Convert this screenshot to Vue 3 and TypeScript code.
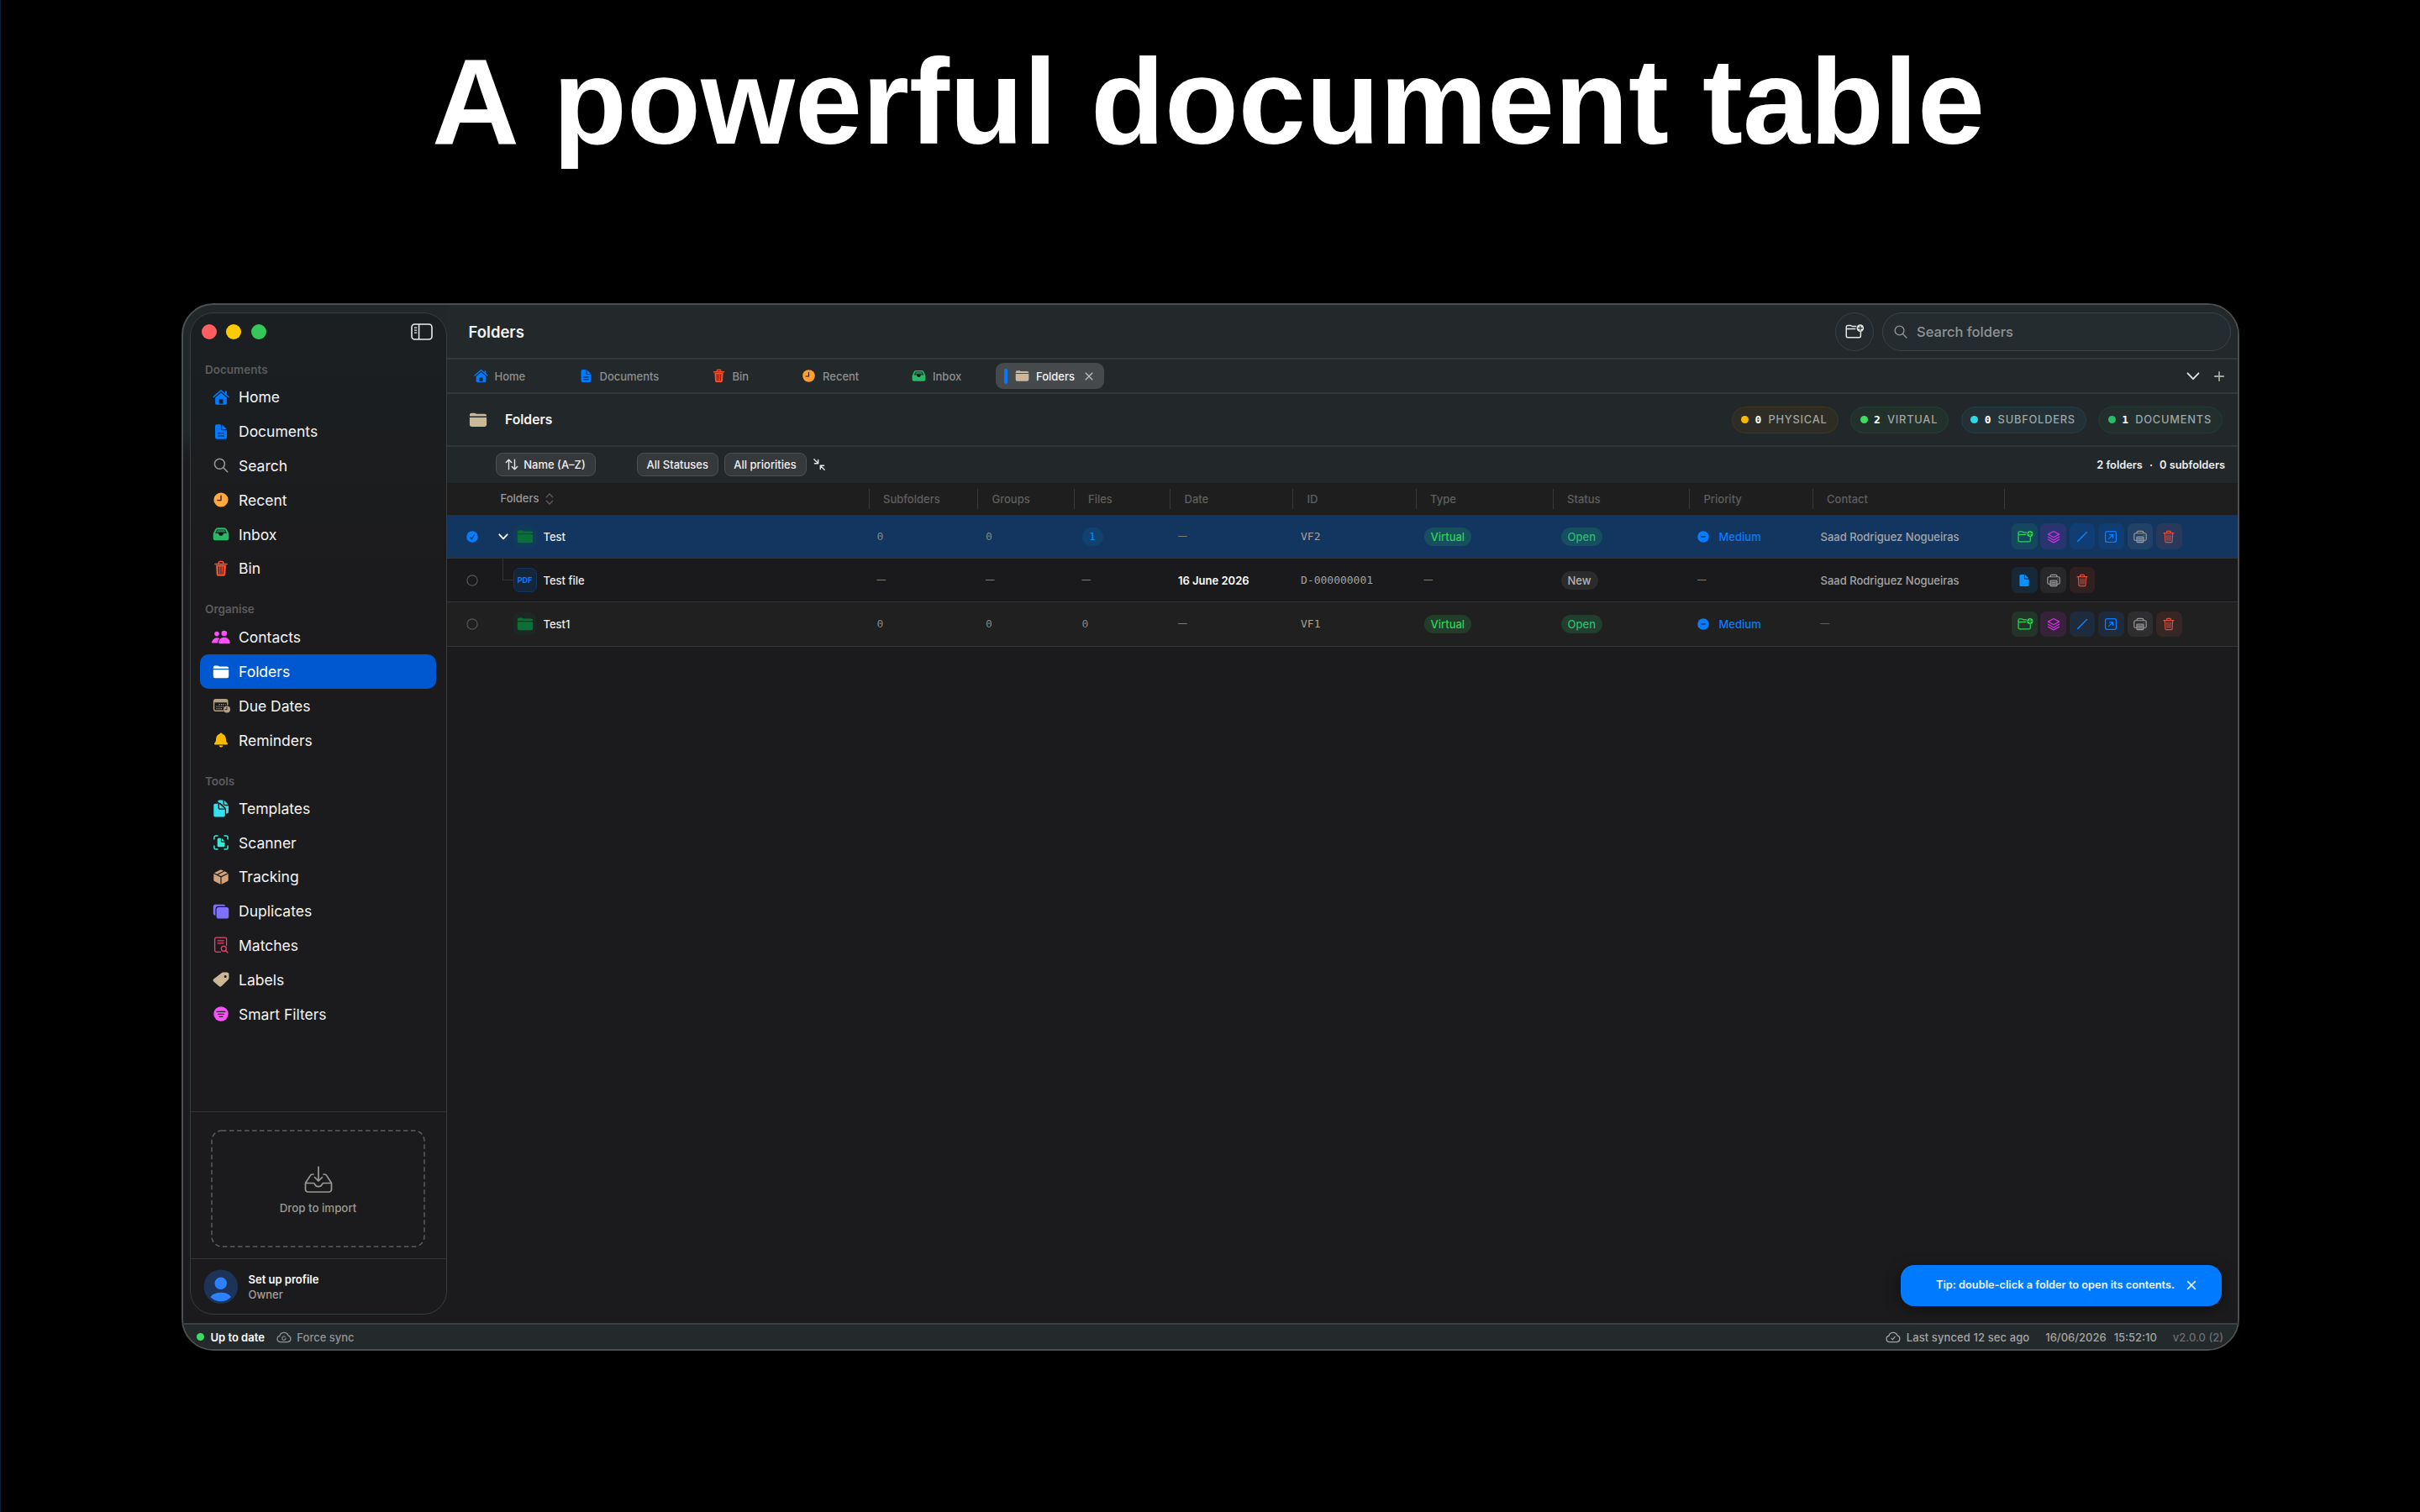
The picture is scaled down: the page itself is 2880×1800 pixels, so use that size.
<script setup lang="ts">
interface NavItem {
  label: string
  icon: string
  color: string
  active?: boolean
}
interface NavGroup {
  title: string
  items: NavItem[]
}
interface Tab {
  label: string
  icon: string
  color: string
  width: number
}
interface Action {
  icon: string
  color: string
}
interface Row {
  name: string
  kind: 'folder' | 'file'
  selected?: boolean
  subfolders: string
  groups: string
  files: string
  date: string
  id: string
  type: string
  status: string
  priority: string
  contact: string
  actions: Action[]
}

const groups: NavGroup[] = [
  {
    title: 'Documents',
    items: [
      { label: 'Home', icon: 'home', color: '#007aff' },
      { label: 'Documents', icon: 'doc', color: '#007aff' },
      { label: 'Search', icon: 'search', color: '#98999b' },
      { label: 'Recent', icon: 'clock', color: '#ffa940' },
      { label: 'Inbox', icon: 'inbox', color: '#28b866' },
      { label: 'Bin', icon: 'binFill', color: '#f2502f' },
    ],
  },
  {
    title: 'Organise',
    items: [
      { label: 'Contacts', icon: 'people', color: '#fa50fa' },
      { label: 'Folders', icon: 'folder', color: '#ffffff', active: true },
      { label: 'Due Dates', icon: 'calendar', color: '#b5a284' },
      { label: 'Reminders', icon: 'bell', color: '#fcb900' },
    ],
  },
  {
    title: 'Tools',
    items: [
      { label: 'Templates', icon: 'docs', color: '#33e1ee' },
      { label: 'Scanner', icon: 'scanner', color: '#33ecd6' },
      { label: 'Tracking', icon: 'box', color: '#d4a27a' },
      { label: 'Duplicates', icon: 'duplicate', color: '#8070ff' },
      { label: 'Matches', icon: 'matches', color: '#f0406c' },
      { label: 'Labels', icon: 'tag', color: '#cbb796' },
      { label: 'Smart Filters', icon: 'filter', color: '#fa50fa' },
    ],
  },
]

const tabs: Tab[] = [
  { label: 'Home', icon: 'home', color: '#007aff', width: 125 },
  { label: 'Documents', icon: 'doc', color: '#007aff', width: 158 },
  { label: 'Bin', icon: 'binFill', color: '#f2502f', width: 107.5 },
  { label: 'Recent', icon: 'clock', color: '#ff9f30', width: 131 },
  { label: 'Inbox', icon: 'inbox', color: '#28b866', width: 101 },
]

const stats = [
  { value: '0', label: 'PHYSICAL', tone: 'amber' },
  { value: '2', label: 'VIRTUAL', tone: 'green' },
  { value: '0', label: 'SUBFOLDERS', tone: 'cyan' },
  { value: '1', label: 'DOCUMENTS', tone: 'emerald' },
]

const columns = ['Subfolders', 'Groups', 'Files', 'Date', 'ID', 'Type', 'Status', 'Priority', 'Contact', '']

const folderActions: Action[] = [
  { icon: 'folderPlus', color: '#30d158' },
  { icon: 'layers', color: '#d530ea' },
  { icon: 'pencil', color: '#0a7dff' },
  { icon: 'openIn', color: '#0a7dff' },
  { icon: 'printer', color: '#98989b' },
  { icon: 'bin', color: '#d8503f' },
]

const rows: Row[] = [
  {
    name: 'Test', kind: 'folder', selected: true, subfolders: '0', groups: '0', files: '1', date: '—',
    id: 'VF2', type: 'Virtual', status: 'Open', priority: 'Medium', contact: 'Saad Rodriguez Nogueiras',
    actions: folderActions,
  },
  {
    name: 'Test file', kind: 'file', subfolders: '—', groups: '—', files: '—', date: '16 June 2026',
    id: 'D-000000001', type: '—', status: 'New', priority: '—', contact: 'Saad Rodriguez Nogueiras',
    actions: [
      { icon: 'sheet', color: '#0a90ff' },
      { icon: 'printer', color: '#98989b' },
      { icon: 'bin', color: '#d8503f' },
    ],
  },
  {
    name: 'Test1', kind: 'folder', subfolders: '0', groups: '0', files: '0', date: '—',
    id: 'VF1', type: 'Virtual', status: 'Open', priority: 'Medium', contact: '—',
    actions: folderActions,
  },
]

const line = (d: string, w = 1.4) =>
  `<path d="${d}" fill="none" stroke="currentColor" stroke-width="${w}" stroke-linecap="round" stroke-linejoin="round"/>`
const fill = (d: string) => `<path d="${d}" fill="currentColor" fill-rule="evenodd"/>`
const dark = (d: string, w = 1.2) =>
  `<path d="${d}" fill="none" stroke="#1c1e20" stroke-width="${w}" stroke-linecap="round" stroke-linejoin="round"/>`

const icons: Record<string, string> = {
  home:
    line('M1.2 9.5 10 1.9l8.8 7.6', 1.6) +
    fill('M14.8 2.6h2v5.2l-2-1.8zM10 4.6l6.9 6v6.7a1.4 1.4 0 0 1-1.4 1.4h-11a1.4 1.4 0 0 1-1.4-1.4v-6.7zM8.2 12.3a.6.6 0 0 0-.6.6v4.6h4.8v-4.6a.6.6 0 0 0-.6-.6z'),
  doc:
    fill('M5 1.2h4.9v5.7a1.4 1.4 0 0 0 1.4 1.4H17v8.5a2 2 0 0 1-2 2H5a2 2 0 0 1-2-2V3.2a2 2 0 0 1 2-2zM11.2 1.4 16.8 7h-5a.6.6 0 0 1-.6-.6z') +
    dark('M6.7 11.7h6.6M6.7 15h6.6', 1.2),
  search: line('M14.4 8.3a6 6 0 1 1-12 0a6 6 0 1 1 12 0zM12.8 12.8l4.9 5', 1.5),
  clock: '<circle cx="10" cy="10" r="8.6" fill="currentColor"/>' + dark('M10 5.2v5.4H5.8', 1.3),
  inbox:
    fill('M6 2.3h8a3 3 0 0 1 2.7 1.6l2 4.2a5 5 0 0 1 .6 2.3v4.6a2.3 2.3 0 0 1-2.3 2.3H3a2.3 2.3 0 0 1-2.3-2.3v-4.6a5 5 0 0 1 .6-2.3l2-4.2A3 3 0 0 1 6 2.3z') +
    '<path d="M6.2 3.9h7.6a1.4 1.4 0 0 1 1.3.8l1.9 4.2h-3.6c-.8 0-.9 3-3.4 3s-2.6-3-3.4-3H3l1.9-4.2a1.4 1.4 0 0 1 1.3-.8z" fill="#17392a"/>' +
    line('M5.6 6.8h8.8M6.3 5h7.4', 0.9) +
    '<path d="M6.8 8h6.4L12 10.4q-2 1.8-4 0z" fill="#101312"/>',
  binFill:
    line('M2.8 4.4h14.4M7.3 4.2V2.6a1 1 0 0 1 1-1h3.4a1 1 0 0 1 1 1v1.6', 1.5) +
    fill('M4 5.6h12l-.7 11.4a2 2 0 0 1-2 1.8H6.7a2 2 0 0 1-2-1.8z') +
    dark('M7.3 7.8l.3 8.4M10 7.8v8.4M12.7 7.8l-.3 8.4', 1.1),
  bin:
    line('M2.6 4.6h14.8M7 4.4V2.6a1 1 0 0 1 1-1h4a1 1 0 0 1 1 1v1.8M4.2 4.8l.7 12a1.7 1.7 0 0 0 1.7 1.6h6.8a1.7 1.7 0 0 0 1.7-1.6l.7-12', 1.5) +
    line('M7.3 7.4l.3 8.2M10 7.4v8.2M12.7 7.4l-.3 8.2', 1.2),
  people:
    '<circle cx="5" cy="5.6" r="2.8" fill="currentColor"/><circle cx="13.8" cy="5" r="3.3" fill="currentColor"/>' +
    fill('M-1 16.6c0-3.5 2.6-6.3 6-6.3 1.3 0 2.4.4 3.3 1-1.5 1.3-2.2 3-2.3 5.3zM7.3 16c0-3.7 2.8-6.3 6.5-6.3s6.9 2.6 6.9 6.3q0 1.3-1.2 1.3H8.5q-1.2 0-1.2-1.3z'),
  folder:
    fill('M.8 7.2h18.4v7.9a2.2 2.2 0 0 1-2.2 2.2H3a2.2 2.2 0 0 1-2.2-2.2zM.8 6V4.7a2.2 2.2 0 0 1 2.2-2.2h3.2c.9 0 1.3.9 2.3.9H17a2.2 2.2 0 0 1 2.2 2.2V6z'),
  calendar:
    line('M12.5 16.3H3.6A2 2 0 0 1 1.6 14.3V4.7a2 2 0 0 1 2-2h12.2a2 2 0 0 1 2 2V9', 1.4) +
    fill('M1.5 4.7a2 2 0 0 1 2-2h12.4a2 2 0 0 1 2 2v1.5H1.5z') +
    '<path d="M7.5 8.7h8M4.5 11.2h8.5M4.5 13.6h6.5" stroke="currentColor" stroke-width="1.2" stroke-dasharray="1.3 1.2"/>' +
    '<circle cx="17" cy="14.4" r="4" fill="currentColor"/>' + dark('M17 12.2v2.5h-2', 0.9),
  bell:
    fill('M10 1.4c.9 0 1.5.6 1.6 1.4 2.5.7 4 2.7 4.2 5.3.2 3.6.8 4.5 2 5.7.5.5.3 1.6-.8 1.6H3c-1.1 0-1.3-1.1-.8-1.6 1.2-1.2 1.8-2.1 2-5.7.2-2.6 1.7-4.6 4.2-5.3.1-.8.7-1.4 1.6-1.4zM7.6 16.6h4.8q-.4 2.1-2.4 2.1t-2.4-2.1z'),
  docs:
    fill('M6.2 2.6A2 2 0 0 1 8 .6h4.5v3.6a3 3 0 0 0 3 3H19v7.2a2 2 0 0 1-2 2h-1v-4.5a4 4 0 0 0-1.2-2.8L10.4 4.7A4 4 0 0 0 7.6 3.5zM13.8.8 18.7 5.7h-4a.9.9 0 0 1-.9-.9zM3.2 4.7h3.4v5.4a1.6 1.6 0 0 0 1.6 1.6h6.6v7a1.9 1.9 0 0 1-1.9 1.9H3.2a1.9 1.9 0 0 1-1.9-1.9V6.6a1.9 1.9 0 0 1 1.9-1.9zM8 5l6.2 5.4H8.8a.8.8 0 0 1-.8-.8z'),
  scanner:
    line('M1.9 6V3.9a2 2 0 0 1 2-2H6M14 1.9h2.1a2 2 0 0 1 2 2V6M18.1 14v2.1a2 2 0 0 1-2 2H14M6 18.1H3.9a2 2 0 0 1-2-2V14', 1.5) +
    fill('M7.2 4.8h2.6v3.7a1.2 1.2 0 0 0 1.2 1.2h3.5v4a1.5 1.5 0 0 1-1.5 1.5H7.2a1.5 1.5 0 0 1-1.5-1.5V6.3a1.5 1.5 0 0 1 1.5-1.5zM11 4.9l3.5 3.6H11.5a.5.5 0 0 1-.5-.5z'),
  box:
    fill('M1.3 6.3 9.4 10.2V18.7L2.1 15.1a1.4 1.4 0 0 1-.8-1.3zM18.7 6.3 10.6 10.2V18.7L17.9 15.1a1.4 1.4 0 0 0 .8-1.3zM9.2 1.6a2 2 0 0 1 1.6 0L13 2.7 5.2 6.8 1.9 5.2zM14.3 3.3 18.1 5.2 10 9.1 6.5 7.4z'),
  duplicate:
    fill('M3.2 1.7h9.6a2.4 2.4 0 0 1 2.4 2.1H7A3.6 3.6 0 0 0 3.4 7.4v7.3a2.4 2.4 0 0 1-2.6-2.4V4.1a2.4 2.4 0 0 1 2.4-2.4z') +
    '<rect x="4.6" y="5" width="14.6" height="13.6" rx="2.6" fill="currentColor"/>',
  matches:
    line('M9.5 18.3H4.4a1.8 1.8 0 0 1-1.8-1.8V2.9a1.8 1.8 0 0 1 1.8-1.8h10.4a1.8 1.8 0 0 1 1.8 1.8V10.5M6 4.8h7.2M6 7.8h7.2', 1.3) +
    line('M16.3 14.3a3 3 0 1 1-6 0a3 3 0 1 1 6 0zM15.6 16.6l2.3 2.4', 1.3),
  tag: fill('M10.5 2.4a2.6 2.6 0 0 1 1.9-.8h4.5a2.5 2.5 0 0 1 2.5 2.5v4.2a2.6 2.6 0 0 1-.8 1.9L10.6 18a2.2 2.2 0 0 1-3.1 0L1.3 12.6a2.2 2.2 0 0 1 0-3.1zM15.2 5.1a1.5 1.5 0 1 0 0 3a1.5 1.5 0 1 0 0-3z'),
  filter: '<circle cx="10" cy="10" r="8.7" fill="currentColor"/>' + dark('M5 7.3h10M6.5 10.3h7M8 13.3h4', 1.3),
  folderPlus:
    line('M12 4.3H8.3C7.3 4.3 7 3.3 6 3.3H2.8A1.6 1.6 0 0 0 1.2 4.9v10.4a1.7 1.7 0 0 0 1.7 1.7h12.9a1.7 1.7 0 0 0 1.7-1.7V11M1.4 7.2h9.8', 1.4) +
    '<circle cx="17" cy="6.3" r="4.1" fill="currentColor"/>' +
    '<path d="M17 4v4.6M14.7 6.3h4.6" stroke="#1c3128" stroke-width="1.2" stroke-linecap="round"/>',
  layers:
    line('M10 1.8 18.2 6.4 10 11 1.8 6.4zM1.8 10.3 10 14.9l8.2-4.6M1.8 14 10 18.6 18.2 14', 1.5),
  pencil: line('M3.2 16.8 14.8 5.2', 1.9) + line('M16.3 3.7l.5-.5', 2.2),
  openIn:
    '<rect x="2" y="2" width="16" height="16" rx="2.6" fill="none" stroke="currentColor" stroke-width="1.6"/>' +
    line('M7 13l5.8-5.8M8.2 6.9h4.9v4.9', 1.6),
  printer:
    line('M5.2 4.5V3.3A1.7 1.7 0 0 1 6.9 1.6h6.2a1.7 1.7 0 0 1 1.7 1.7v1.2M4.5 15.3H3a2 2 0 0 1-2-2V6.7a2 2 0 0 1 2-2h14a2 2 0 0 1 2 2v6.6a2 2 0 0 1-2 2h-1.5', 1.5) +
    '<rect x="5" y="10" width="10" height="8.3" rx="1" fill="currentColor" fill-opacity=".45" stroke="currentColor" stroke-width="1.5"/>' +
    line('M7.2 13.2h5.6M7.2 15.6h5.6', 1) + line('M15.7 7.4h.1', 1.3),
  sheet:
    fill('M5 1.2h4.9v5.7a1.4 1.4 0 0 0 1.4 1.4H17v8.5a2 2 0 0 1-2 2H5a2 2 0 0 1-2-2V3.2a2 2 0 0 1 2-2zM11.2 1.4 16.8 7h-5a.6.6 0 0 1-.6-.6z'),
  cloudSync:
    line('M5.2 16.2a4 4 0 0 1-.9-7.9A5.9 5.9 0 0 1 15.5 7.6a4.4 4.4 0 0 1-.4 8.6z', 1.4) +
    line('M12.3 11.2a2.4 2.4 0 1 1-1-1.9', 1.2),
  cloudCheck:
    line('M5.2 16.2a4 4 0 0 1-.9-7.9A5.9 5.9 0 0 1 15.5 7.6a4.4 4.4 0 0 1-.4 8.6z', 1.4) +
    line('M7.7 11.4l1.6 1.8 3.1-4', 1.3),
}
</script>

<template>
  <div class="page">
    <h1 class="headline">A powerful document table</h1>

    <div class="window">
      <div class="body">
        <aside class="sidebar">
          <div class="titlebar">
            <span class="light red"></span>
            <span class="light yellow"></span>
            <span class="light green"></span>
            <svg class="toggle" viewBox="0 0 26 20">
              <rect x="1" y="1" width="24" height="18" rx="3.5" fill="none" stroke="#eceded" stroke-width="1.6" />
              <path d="M9.6 1v18" stroke="#eceded" stroke-width="1.5" />
              <path d="M4 5.2h3.2M4 8.2h3.2M4 11.2h3.2" stroke="#eceded" stroke-width="1.2" />
            </svg>
          </div>

          <nav class="nav">
            <section v-for="g in groups" :key="g.title">
              <h2 class="nav-title">{{ g.title }}</h2>
              <a v-for="i in g.items" :key="i.label" class="nav-item" :class="{ active: i.active }">
                <svg class="icon" viewBox="0 0 20 20" :style="{ color: i.color }" v-html="icons[i.icon]"></svg>
                <span>{{ i.label }}</span>
              </a>
            </section>
          </nav>

          <div class="import">
            <div class="dropzone">
              <svg class="dash" width="255" height="140">
                <rect x="1" y="1" width="253" height="138" rx="12" />
              </svg>
              <svg class="tray" viewBox="0 0 34 32">
                <path
                  d="M11 10H9.8a3 3 0 0 0-2.6 1.6L1.6 20.3M23 10h1.2a3 3 0 0 1 2.6 1.6l5.6 8.7M1.5 20.5V28a3 3 0 0 0 3 3h25a3 3 0 0 0 3-3v-7.5H22.5c-1.3 0-.8 4.2-5.5 4.2s-4.2-4.2-5.5-4.2zM17 1.2v16.5M12.5 13.5l4.5 4.5 4.5-4.5"
                />
              </svg>
              <span>Drop to import</span>
            </div>
          </div>

          <div class="profile">
            <svg class="avatar" viewBox="0 0 42 42">
              <circle cx="21" cy="21" r="20.5" fill="#1d3458" />
              <circle cx="21" cy="17" r="7.3" fill="#2b81ff" />
              <path d="M8.5 33.5Q12 28 21 28t12.5 5.5Q28.5 38.8 21 38.8T8.5 33.5z" fill="#2b81ff" />
            </svg>
            <div class="who">
              <b>Set up profile</b>
              <span>Owner</span>
            </div>
          </div>
        </aside>

        <main class="main">
          <header class="toolbar">
            <h2>Folders</h2>
            <div class="round">
              <svg viewBox="0 0 20 20" v-html="icons.folderPlus"></svg>
            </div>
            <div class="search">
              <svg viewBox="0 0 20 20" v-html="icons.search"></svg>
              <span>Search folders</span>
            </div>
          </header>

          <div class="tabs">
            <div v-for="t in tabs" :key="t.label" class="tab" :style="{ width: t.width + 'px' }">
              <svg class="tab-icon" viewBox="0 0 20 20" :style="{ color: t.color }" v-html="icons[t.icon]"></svg>
              <span>{{ t.label }}</span>
            </div>
            <div class="tab current">
              <i class="marker"></i>
              <svg class="tab-icon sand" viewBox="0 0 20 20" v-html="icons.folder"></svg>
              <span>Folders</span>
              <svg class="close" viewBox="0 0 10 10"><path d="M.8.8l8.4 8.4M9.2.8.8 9.2" /></svg>
            </div>
            <div class="tab-tools">
              <svg width="16" height="10" viewBox="0 0 16 10">
                <path d="M1.5 1.3 8 8.2l6.5-6.9" stroke="#e4e5e5" />
              </svg>
              <svg width="12" height="12" viewBox="0 0 12 12">
                <path d="M6 .8v10.4M.8 6h10.4" stroke="#a5a5a0" />
              </svg>
            </div>
          </div>

          <div class="heading">
            <svg viewBox="0 0 20 20" v-html="icons.folder"></svg>
            <h3>Folders</h3>
            <div class="stats">
              <div v-for="s in stats" :key="s.label" class="stat" :class="s.tone">
                <i></i><b>{{ s.value }}</b><span>{{ s.label }}</span>
              </div>
            </div>
          </div>

          <div class="filters">
            <button class="btn sort">
              <svg width="16" height="14" viewBox="0 0 16 14">
                <path d="M4.5 12.8V1.4M1.3 4.6l3.2-3.3 3.2 3.3M11.5 1.2v11.4M8.3 9.4l3.2 3.3 3.2-3.3" />
              </svg>
              Name (A–Z)
            </button>
            <button class="btn status">All Statuses</button>
            <button class="btn priority">All priorities</button>
            <svg class="collapse" viewBox="0 0 14 14">
              <path d="M.8.8 5.3 5.3M1.4 5.7h4.3V1.4M13.2 13.2 8.7 8.7M12.6 8.3H8.3v4.3" />
            </svg>
            <p class="count">2 folders<span>·</span>0 subfolders</p>
          </div>

          <div class="table">
            <div class="row thead">
              <div class="th first">
                Folders
                <svg width="10" height="14" viewBox="0 0 10 14"><path d="M1.3 4.8 5 1l3.7 3.8M1.3 9.2 5 13l3.7-3.8" /></svg>
              </div>
              <div v-for="c in columns" :key="c" class="th">{{ c }}</div>
            </div>

            <div v-for="r in rows" :key="r.name" class="row" :class="[r.kind, { selected: r.selected }]">
              <div class="name">
                <svg class="check" viewBox="0 0 14 14">
                  <template v-if="r.selected">
                    <circle cx="7" cy="7" r="6.8" fill="#087cff" />
                    <path d="M4.2 7.4l2 2.3 3.6-5.2" fill="none" stroke="#12365f" stroke-width="1.3" />
                  </template>
                  <circle v-else cx="7" cy="7" r="6.1" fill="none" stroke="#565658" stroke-width="1.2" />
                </svg>
                <span class="expander">
                  <svg v-if="r.selected" width="12" height="8" viewBox="0 0 12 8"><path d="M1.3 1.3 6 6.3l4.7-5" /></svg>
                  <i v-if="r.kind === 'file'" class="branch"></i>
                </span>
                <span class="thumb" :class="r.kind">
                  <svg v-if="r.kind === 'folder'" viewBox="0 0 20 20" v-html="icons.folder"></svg>
                  <template v-else>PDF</template>
                </span>
                <span class="label">{{ r.name }}</span>
              </div>
              <div class="cell mono" :class="{ empty: r.subfolders === '—' }">{{ r.subfolders }}</div>
              <div class="cell mono" :class="{ empty: r.groups === '—' }">{{ r.groups }}</div>
              <div class="cell mono" :class="{ empty: r.files === '—' }">
                <span :class="{ 'file-count': r.files === '1' }">{{ r.files }}</span>
              </div>
              <div class="cell" :class="r.date === '—' ? 'empty' : 'date'">{{ r.date }}</div>
              <div class="cell mono id">{{ r.id }}</div>
              <div class="cell" :class="{ empty: r.type === '—' }">
                <span :class="{ 'tag virtual': r.type !== '—' }">{{ r.type }}</span>
              </div>
              <div class="cell"><span class="tag" :class="r.status.toLowerCase()">{{ r.status }}</span></div>
              <div class="cell" :class="{ empty: r.priority === '—' }">
                <span v-if="r.priority !== '—'" class="prio">
                  <svg viewBox="0 0 14 14"><circle cx="7" cy="7" r="6.8" fill="#087cff" /><path d="M4.3 7h5.4" stroke="#173457" stroke-width="1.4" /></svg>
                  {{ r.priority }}
                </span>
                <template v-else>—</template>
              </div>
              <div class="cell contact" :class="{ empty: r.contact === '—' }">{{ r.contact }}</div>
              <div class="actions">
                <span v-for="a in r.actions" :key="a.icon" class="action" :style="{ color: a.color }">
                  <svg :class="{ wide: a.icon === 'folderPlus' }" viewBox="0 0 20 20" v-html="icons[a.icon]"></svg>
                </span>
              </div>
            </div>
          </div>

          <div class="toast">
            <span>Tip: double-click a folder to open its contents.</span>
            <svg width="12" height="12" viewBox="0 0 12 12"><path d="M1.2 1.2l9.6 9.6M10.8 1.2 1.2 10.8" /></svg>
          </div>
        </main>
      </div>

      <footer class="statusbar">
        <i class="online"></i>
        <b>Up to date</b>
        <svg class="cloud left" viewBox="0 0 20 20" v-html="icons.cloudSync"></svg>
        <span class="force">Force sync</span>
        <svg class="cloud right" viewBox="0 0 20 20" v-html="icons.cloudCheck"></svg>
        <span class="synced">Last synced 12 sec ago</span>
        <span class="day">16/06/2026</span>
        <span class="time">15:52:10</span>
        <span class="version">v2.0.0 (2)</span>
      </footer>
    </div>
  </div>
</template>

<style>
body {
  background: #000;
  overflow: hidden;
}
</style>

<style scoped>
.page {
  box-sizing: border-box;
  width: 2880px;
  height: 1800px;
  background: #000;
  border-left: 1px solid #0a2040;
  font-family: Inter, 'Liberation Sans', sans-serif;
  font-size: 13px;
  color: #f0f0f0;
}
.page * {
  box-sizing: border-box;
}
svg {
  display: block;
  flex: none;
  overflow: visible;
}
h1, h2, h3, p {
  margin: 0;
}
.headline {
  height: 361px;
  padding: 36px 5px 0 0;
  text-align: center;
  font: 700 144px/172px 'Liberation Sans', Arial, sans-serif;
  font-kerning: none;
  color: #fff;
  white-space: nowrap;
}
.window {
  display: flex;
  flex-direction: column;
  width: 2449px;
  height: 1247px;
  margin-left: 215px;
  border: 2px solid #4b4f50;
  border-radius: 38px;
  overflow: hidden;
  background: linear-gradient(#22272a 0, #22272a 150px, #1b1b1d 185px);
}
.body {
  display: flex;
  height: 1212px;
}

/* Sidebar */
.sidebar {
  display: flex;
  flex-direction: column;
  width: 305.5px;
  height: 1193px;
  margin: 9px 0 0 8px;
  border: 1.5px solid #383d41;
  border-radius: 28px;
  background: linear-gradient(#1c1f21 0, #1b1e20 130px, #1b1b1d 300px);
  overflow: hidden;
  flex: none;
}
.titlebar {
  display: flex;
  align-items: center;
  gap: 11.5px;
  height: 44px;
  padding: 0 15.5px 0 12.5px;
  flex: none;
}
.light {
  width: 18px;
  height: 18px;
  border-radius: 50%;
}
.light.red { background: #ff5d5f; }
.light.yellow { background: #fccb00; }
.light.green { background: #34c759; }
.toggle {
  width: 26px;
  height: 20px;
  margin-left: auto;
}
.nav {
  flex: 1;
  padding: 0 11.5px 0 10.5px;
}
.nav-title {
  height: 41.2px;
  padding: 18px 0 0 6.5px;
  font-size: 13.5px;
  line-height: 20px;
  font-weight: 600;
  color: #5b5c5e;
}
section:first-child .nav-title {
  height: 35.5px;
  padding-top: 12.5px;
}
section:last-child .nav-title {
  height: 40.2px;
}
.nav-item {
  display: flex;
  align-items: center;
  height: 40.8px;
  padding-left: 15px;
  gap: 11.5px;
  font-size: 17.5px;
  border-radius: 10px;
  color: #f4f4f4;
}
.nav-item.active {
  background: #0058d0;
  color: #fff;
}
.icon {
  width: 20px;
  height: 20px;
}
.import {
  height: 175px;
  padding: 21px 0 0 24px;
  border-top: 1.5px solid #343436;
  flex: none;
}
.dropzone {
  position: relative;
  display: flex;
  flex-direction: column;
  align-items: center;
  width: 255px;
  height: 140px;
  padding-top: 43px;
  font-size: 13.3px;
  font-weight: 500;
  color: #9a9a95;
}
.dropzone span {
  margin-top: 9px;
  line-height: 18px;
}
.dash {
  position: absolute;
  inset: 0;
}
.dash rect {
  fill: none;
  stroke: #5d5d5c;
  stroke-width: 1.5;
  stroke-dasharray: 5.5 3.5;
}
.tray {
  width: 34px;
  height: 32px;
  fill: none;
  stroke: #9a9a95;
  stroke-width: 1.7;
  stroke-linecap: round;
  stroke-linejoin: round;
}
.profile {
  display: flex;
  align-items: center;
  gap: 12.5px;
  height: 66px;
  padding: 1px 0 0 14.5px;
  border-top: 1.5px solid #343436;
  flex: none;
}
.avatar {
  width: 41.5px;
  height: 41.5px;
}
.who {
  display: flex;
  flex-direction: column;
  line-height: 18px;
}
.who b {
  font-weight: 600;
  color: #fff;
}
.who span {
  color: #a0a09c;
  font-weight: 500;
}

/* Main column */
.main {
  position: relative;
  display: flex;
  flex-direction: column;
  flex: 1;
  background: #1b1b1d;
}
.toolbar {
  display: flex;
  align-items: center;
  height: 65px;
  padding: 0 8px 0 26px;
  background: #23282b;
  border-bottom: 2px solid #34383b;
}
.toolbar h2 {
  font-size: 18.5px;
  font-weight: 600;
  color: #f2f3f3;
  margin-right: auto;
}
.round {
  display: flex;
  align-items: center;
  justify-content: center;
  width: 46px;
  height: 46px;
  margin-right: 10.5px;
  border: 1.5px solid #364247;
  border-radius: 50%;
  background: #242b2e;
  color: #e6e7e7;
}
.round svg {
  width: 21px;
  height: 21px;
}
.search {
  display: flex;
  align-items: center;
  gap: 10px;
  width: 415px;
  height: 46px;
  padding-left: 12px;
  border: 1.5px solid #38454a;
  border-radius: 23px;
  background: #252c2f;
  font-size: 16.5px;
  font-weight: 500;
  color: #8f9496;
}
.search svg {
  width: 18px;
  height: 18px;
}
.tabs {
  display: flex;
  align-items: center;
  height: 41px;
  padding-left: 32px;
  background: #23282b;
  border-bottom: 2px solid #34383b;
}
.tab {
  display: flex;
  align-items: center;
  gap: 8px;
  flex: none;
  font-weight: 500;
  color: #8d8f8e;
}
.tab-icon {
  width: 17px;
  height: 17px;
}
.tab-icon.sand {
  color: #cbb899;
}
.tab.current {
  width: 129.5px;
  height: 31px;
  margin-left: -1.5px;
  padding-left: 10.5px;
  border-radius: 9px;
  background: #464a4d;
  color: #f4f4f4;
}
.marker {
  width: 3.5px;
  height: 18px;
  margin-right: 1.5px;
  border-radius: 2px;
  background: #007aff;
}
.close {
  width: 10px;
  height: 10px;
  margin-left: 4px;
  fill: none;
  stroke: #b9bbbb;
  stroke-width: 1.4;
}
.tab-tools {
  display: flex;
  align-items: center;
  gap: 17px;
  margin: 0 16px 0 auto;
  fill: none;
  stroke-width: 1.8;
  stroke-linecap: round;
  stroke-linejoin: round;
}
.heading {
  display: flex;
  align-items: center;
  height: 63px;
  padding: 0 18px 0 26px;
  background: #22272a;
  border-bottom: 2px solid #343536;
}
.heading > svg {
  width: 22px;
  height: 22px;
  color: #cbb899;
}
.heading h3 {
  margin-left: 21.5px;
  font-size: 15.7px;
  font-weight: 600;
  color: #f4f4f4;
}
.stats {
  display: flex;
  gap: 14.5px;
  margin-left: auto;
}
.stat {
  display: flex;
  align-items: center;
  height: 32px;
  padding: 0 12px 0 10.5px;
  border: 1.5px solid;
  border-radius: 16px;
  font-size: 12.8px;
  letter-spacing: .8px;
  color: #9fa5a5;
  font-weight: 500;
}
.stat i {
  width: 9px;
  height: 9px;
  border-radius: 50%;
}
.stat b {
  margin: 0 8px 0 7.5px;
  font: 700 13px 'DejaVu Sans Mono', monospace;
  letter-spacing: 0;
  color: #fff;
}
.stat.amber { background: #2d2c25; border-color: #41371f; }
.stat.amber i { background: #fbb800; }
.stat.green { background: #23312d; border-color: #244033; }
.stat.green i { background: #3ddc62; }
.stat.cyan { background: #233136; border-color: #204047; }
.stat.cyan i { background: #2bd9e6; }
.stat.emerald { background: #222f2d; border-color: #233d35; }
.stat.emerald i { background: #28bd69; }

.filters {
  display: flex;
  align-items: center;
  height: 42.5px;
  padding: 0 15px 0 58px;
  background: #22272a;
}
.btn {
  display: flex;
  align-items: center;
  justify-content: center;
  gap: 6px;
  height: 28px;
  padding: 0;
  border: 1.5px solid #4b4f51;
  border-radius: 8px;
  background: #36393c;
  font: 500 13px Inter, sans-serif;
  color: #f0f0f0;
  white-space: nowrap;
}
.btn.sort { width: 119px; margin-right: 49.5px; }
.btn.status { width: 96.5px; margin-right: 7px; }
.btn.priority { width: 98px; margin-right: 8px; }
.btn svg,
.collapse {
  fill: none;
  stroke: #e4e5e5;
  stroke-width: 1.4;
  stroke-linecap: round;
  stroke-linejoin: round;
}
.collapse {
  width: 14px;
  height: 14px;
}
.count {
  margin-left: auto;
  font-size: 12.8px;
  font-weight: 600;
  color: #f0f0f0;
}
.count span {
  margin: 0 8px;
}

/* Table */
.row {
  display: grid;
  grid-template-columns: 502px 129.5px 114.5px 114.5px 146px 146.5px 163px 162.5px 146.5px 228px 1fr;
  align-items: center;
  height: 52.2px;
  border-bottom: 1.5px solid #343436;
  background: #1a1a1c;
}
.row.thead {
  height: 38.5px;
  border-bottom: 0;
  background: #1e1e1e;
}
.row.folder {
  background: #202021;
}
.row.selected {
  background: #12365f;
}
.th {
  height: 24.5px;
  padding-left: 16.5px;
  border-left: 1.5px solid #393939;
  line-height: 25px;
  font-weight: 500;
  color: #5f5f5f;
}
.th.first {
  display: flex;
  align-items: center;
  gap: 7px;
  padding-left: 64px;
  border: 0;
  color: #98989a;
}
.th svg {
  fill: none;
  stroke: #5c5c5c;
  stroke-width: 1.3;
  stroke-linecap: round;
}
.name {
  display: flex;
  align-items: center;
  padding-left: 23.5px;
}
.check {
  width: 14px;
  height: 14px;
}
.expander {
  position: relative;
  display: flex;
  align-items: center;
  width: 42px;
  padding-left: 24px;
}
.expander svg {
  fill: none;
  stroke: #fff;
  stroke-width: 1.8;
  stroke-linecap: round;
  stroke-linejoin: round;
}
.branch {
  position: absolute;
  left: 29px;
  bottom: 0;
  width: 13px;
  height: 26px;
  border: solid #333335;
  border-width: 0 0 1.5px 1.5px;
}
.thumb {
  display: flex;
  align-items: center;
  justify-content: center;
  width: 27px;
  height: 27px;
  border-radius: 7px;
  background: #0d7a3a18;
  color: #0a7038;
}
.thumb svg {
  width: 20px;
  height: 20px;
}
.thumb.file {
  width: 28px;
  height: 29px;
  margin: 0 -.5px;
  border: 1.5px solid #12365f;
  background: #14263c;
  font-size: 9px;
  font-weight: 700;
  color: #0a7aff;
}
.label {
  margin-left: 8.5px;
  font-weight: 500;
  color: #ececec;
}
.cell {
  padding-left: 10px;
  font-weight: 500;
  color: #85857f;
  white-space: nowrap;
}
.cell.mono {
  font-family: 'DejaVu Sans Mono', monospace;
  font-weight: 400;
}
.cell.id {
  color: #a3a39f;
}
.cell.date {
  font-weight: 600;
  color: #fff;
}
.cell.contact {
  color: #a3a6a8;
}
.cell.empty {
  font: 600 10.5px Inter, sans-serif;
  color: #7c7c78;
}
.cell.contact.empty {
  color: #5f5f5f;
}
.file-count {
  display: inline-block;
  width: 25px;
  border-radius: 11px;
  background: #11426f;
  color: #0a8cff;
  line-height: 22px;
  text-align: center;
}
.tag {
  display: inline-block;
  padding: 0 8px;
  border-radius: 11px;
  line-height: 22px;
}
.tag.virtual { color: #30d158; background: #30d1582b; }
.tag.open { color: #28bd69; background: #28bd6930; }
.tag.new { color: #b5b5b0; background: #2b2b2c; }
.prio {
  display: flex;
  align-items: center;
  gap: 11.5px;
  color: #087cff;
}
.prio svg {
  width: 14px;
  height: 14px;
}
.actions {
  display: flex;
  gap: 3.8px;
  padding-left: 9.5px;
}
.action {
  display: flex;
  align-items: center;
  justify-content: center;
  width: 30.6px;
  height: 30.6px;
  border-radius: 7px;
  background: color-mix(in srgb, currentColor 12%, transparent);
}
.action svg {
  width: 16px;
  height: 16px;
}
.action svg.wide {
  width: 17.5px;
  height: 17.5px;
}

.toast {
  position: absolute;
  right: 19px;
  bottom: 20px;
  display: flex;
  align-items: center;
  width: 382px;
  height: 49px;
  padding: 0 30px 2px 42px;
  border-radius: 16px;
  background: #007aff;
  box-shadow: 0 4px 18px #0006;
  font-size: 12.8px;
  font-weight: 600;
  color: #eaf3ff;
  white-space: nowrap;
}
.toast svg {
  margin-left: auto;
  fill: none;
  stroke: #e0edff;
  stroke-width: 1.7;
}

/* Status bar */
.statusbar {
  display: flex;
  align-items: center;
  flex: 1;
  padding: 0 17px 0 16px;
  border-top: 2px solid #3b4042;
  background: #24292c;
  font-weight: 500;
  color: #a3a5a2;
  white-space: nowrap;
}
.online {
  width: 9px;
  height: 9px;
  margin-right: 7.5px;
  border-radius: 50%;
  background: #3bdc60;
}
.statusbar b {
  font-weight: 600;
  color: #fff;
}
.cloud {
  width: 18px;
  height: 18px;
}
.cloud.left {
  margin: 0 6px 0 14.5px;
  color: #8f9496;
}
.cloud.right {
  margin: 0 6.5px 0 auto;
}
.force {
  color: #8f9496;
}
.synced { letter-spacing: .1px; }
.day { margin-left: 19px; }
.time { margin-left: 9px; }
.version {
  margin-left: 19px;
  color: #696d6e;
}
</style>
